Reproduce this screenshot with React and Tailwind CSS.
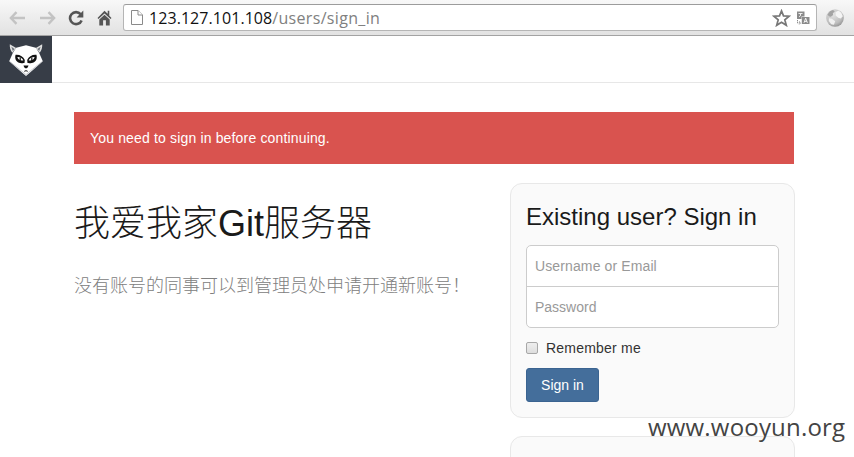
function BackIcon() {
  return (
    <svg className="w-[17px] h-[14px]" viewBox="0 0 17 14" fill="none" stroke="#c3c3c3" strokeWidth="2.4">
      <path d="M7.5 1.2 1.9 7l5.6 5.8M2.2 7H16" />
    </svg>
  );
}

function ForwardIcon() {
  return (
    <svg className="w-[17px] h-[14px]" viewBox="0 0 17 14" fill="none" stroke="#c3c3c3" strokeWidth="2.4">
      <path d="M9.5 1.2 15.1 7l-5.6 5.8M14.8 7H1" />
    </svg>
  );
}

function ReloadIcon() {
  return (
    <svg className="w-4 h-4" viewBox="0 0 16 16">
      <path d="M12.6 4.2A6 6 0 1 0 13.6 10.4" fill="none" stroke="#555" strokeWidth="2.6" />
      <path d="M15.3 0.6v6.9H8.6z" fill="#555" />
    </svg>
  );
}

function HomeIcon() {
  return (
    <svg className="w-[15px] h-4" viewBox="0 0 15 16" fill="#555">
      <path d="M7.5 .8.5 7.9l1 1.1 6-5.6 6 5.6 1-1.1-2.2-2.2V.8h-1.6v3z" />
      <path d="M7.5 4.8 2.3 9.6v5.9h3.8V10.2h2.8v5.3h3.8V9.6z" />
    </svg>
  );
}

function PageIcon() {
  return (
    <svg className="w-3 h-[15px]" viewBox="0 0 12 15" fill="#fff" stroke="#8a8a8a">
      <path d="M.5.5H7L11.5 5v9.5H.5z" />
      <path d="M7 .5V5h4.5" />
    </svg>
  );
}

function StarIcon() {
  return (
    <svg className="w-[19px] h-[18px]" viewBox="0 0 19 18" fill="#fff" stroke="#777" strokeWidth="1.7">
      <path d="M9.5 1.9 11.5 6.9 17.1 7.2 12.8 10.8 14.3 16.3 9.5 13.2 4.7 16.3 6.2 10.8 1.9 7.2 7.5 6.9z" />
    </svg>
  );
}

function TranslateIcon() {
  return (
    <svg className="w-[14px] h-[14px]" viewBox="0 0 14 14">
      <path d="M1 .5h7.5v5H5.5V8H1z" fill="#8b8b8b" />
      <path d="M2.5 2.5h4M4.5 2v2M3 5.8l2-1.6" stroke="#eee" fill="none" />
      <path d="M5.8 6h7.7v7H5.8z" fill="#8b8b8b" />
      <path d="m8 11.8 1.7-4.6 1.7 4.6M8.6 10.4h2.2" stroke="#fff" fill="none" strokeWidth=".9" />
      <path d="M1.5 9v3h3M3 10.5 4.7 12 3 13.6" stroke="#8b8b8b" fill="none" strokeDasharray="1.4 .7" />
    </svg>
  );
}

function GlobeIcon() {
  return (
    <svg className="w-[18px] h-[18px]" viewBox="0 0 18 18">
      <defs>
        <radialGradient id="globe" cx=".4" cy=".3" r=".75">
          <stop offset="0" stopColor="#e4e4e4" />
          <stop offset=".7" stopColor="#bdbdbd" />
          <stop offset="1" stopColor="#8f8f8f" />
        </radialGradient>
      </defs>
      <circle cx="9" cy="9" r="8.8" fill="url(#globe)" />
      <path d="M1.5 5.5 4 2.3 7 1l1.8 1.6-2 1.6.4 1.9-2.5 1.6-1.8-.5z" fill="#a3a3a3" />
      <path d="m9.5 3.2 3-1.6 2.8 2.2 1.5 3.5-2 2.3-2.6-.8-2.5-2.4z" fill="#f4f4f4" />
      <path d="m3 9.2 3 .6 3.2 2.4-1.3 3.6-2.6-.6L2.8 12z" fill="#f0f0f0" />
    </svg>
  );
}

function Logo() {
  return (
    <svg className="w-[36px] h-[34px]" viewBox="0 0 36 34">
      <path d="M1.8 1.2 8.2 5 4.3 9.8C2.3 7 1.6 4.2 1.8 1.2z" fill="#dedede" />
      <path d="M34.2 1.2 27.8 5l3.9 4.8c2-2.8 2.7-5.6 2.5-8.6z" fill="#dedede" />
      <path d="M3.4 3.8 6.6 6 4.8 8z M32.6 3.8 29.4 6l1.8 2z" fill="#6d727a" />
      <path d="M18 2.2 27.8 4.7 31.2 10 34.8 18.2 25.5 26.5 18 33 10.5 26.5 1.2 18.2 4.8 10 8.2 4.7z" fill="#fff" />
      <path d="m2.2 18.8 9 7.2L18 31.6l6.8-5.6 9-7.2" fill="none" stroke="#afb2b7" strokeWidth=".7" />
      <path d="M7.6 11.7c4.2-.4 7.6 1.7 9.2 5.3l-.3 3.1c-4 .5-8.4-.6-9.1-4.4-.3-1.6-.2-2.8.2-4z" fill="#111" />
      <path d="M28.4 11.7c-4.2-.4-7.6 1.7-9.2 5.3l.3 3.1c4 .5 8.4-.6 9.1-4.4.3-1.6.2-2.8-.2-4z" fill="#111" />
      <path d="M9.4 14.1c2.6-.1 4.5.8 6 3.1-2.9.7-5.3-.3-6-3.1zM26.6 14.1c-2.6-.1-4.5.8-6 3.1 2.9.7 5.3-.3 6-3.1z" fill="#fff" />
      <path d="M12.2 14.4v3M23.8 14.4v3" stroke="#111" strokeWidth="1.2" />
      <path d="M15.5 22.6h5l-.8 1.8L18 25.6l-1.7-1.2z" fill="#111" />
      <path d="m16.3 28.3 1.7-.6 1.7.6" fill="none" stroke="#111" />
    </svg>
  );
}

function BrowserBar() {
  return (
    <div className="flex h-9 items-center border-b border-[#a3a3a3] bg-linear-to-b from-[#f8f8f8] to-[#e2e2e2] pl-[9px] pr-[10px]">
      <div className="flex items-center">
        <BackIcon />
        <span className="ml-[13px]"><ForwardIcon /></span>
        <span className="ml-3"><ReloadIcon /></span>
        <span className="ml-[13px]"><HomeIcon /></span>
      </div>
      <div className="ml-[11px] flex h-[27px] w-[695px] items-center rounded-[3px] border border-[#b5b5b5] border-t-[#9c9c9c] bg-white pl-[7px] pr-[6px]">
        <PageIcon />
        <span className="ml-[6px] whitespace-nowrap pt-px font-['Open_Sans','Noto_Sans',sans-serif] text-base leading-6 tracking-[0.32px] text-[#808080]">
          <span className="tracking-[0.06px] text-[#111]">123.127.101.108</span>/users/sign_in
        </span>
        <span className="ml-auto"><StarIcon /></span>
        <span className="ml-[5px]"><TranslateIcon /></span>
      </div>
      <span className="ml-[9px]"><GlobeIcon /></span>
    </div>
  );
}

function SignInCard() {
  return (
    <section className="h-[235px] rounded-xl border border-[#e8e8e8] bg-[#fafafa] px-[15px] pt-[19px]">
      <h3 className="text-2xl leading-7 text-[#1a1a1a]">Existing user? Sign in</h3>
      <div className="mt-[14px] h-[83px] w-[253px] overflow-hidden rounded-[5px] border border-[#ccc] bg-white">
        <input className="block h-[41px] w-full border-b border-[#ccc] px-2 text-sm tracking-[0.12px] outline-none placeholder:text-[#999]" placeholder="Username or Email" />
        <input className="block h-10 w-full px-2 text-sm outline-none placeholder:text-[#999]" type="password" placeholder="Password" />
      </div>
      <label className="mt-[10px] flex h-5 items-center gap-2 text-sm tracking-[0.22px] text-[#333]">
        <input type="checkbox" className="h-3 w-3 appearance-none rounded-[2px] border border-[#a8a8a8] bg-linear-to-b from-[#eee] to-[#dedede]" />
        Remember me
      </label>
      <button className="mt-[10px] h-[34px] w-[73px] rounded-[3px] border border-[#3b6491] bg-[#446e9b] text-sm text-white">Sign in</button>
    </section>
  );
}

export default function App() {
  return (
    <div className="relative h-[457px] w-[854px] overflow-hidden bg-white font-['Liberation_Sans','Noto_Sans_CJK_SC',sans-serif]">
      <BrowserBar />
      <header className="h-[47px] border-b border-[#e7e7e7]">
        <div className="flex h-[47px] w-[52px] items-center justify-center bg-[#373d47]">
          <Logo />
        </div>
      </header>
      <main className="ml-[74px] mt-[29px] w-[721px]">
        <div className="flex h-[52px] w-[720px] items-center bg-[#d9534f] px-4 text-sm tracking-[0.16px] text-white">
          You need to sign in before continuing.
        </div>
        <div className="mt-[19px] flex justify-between">
          <div className="pt-[19px]">
            <h1 className="whitespace-nowrap text-4xl leading-[44px] font-light text-[#1a1a1a]">
              我爱我家Git服务器
            </h1>
            <p className="mt-[27px] whitespace-nowrap text-lg leading-[26px] font-light text-[#808080]">
              没有账号的同事可以到管理员处申请开通新账号！
            </p>
          </div>
          <div className="flex w-[285px] flex-col gap-[18px]">
            <SignInCard />
            <section className="h-[60px] rounded-xl border border-[#e8e8e8] bg-[#fafafa]" />
          </div>
        </div>
      </main>
      <div className="absolute left-[648px] top-[411px] whitespace-nowrap font-['Open_Sans','Noto_Sans',sans-serif] text-2xl leading-8 tracking-[0.19px] text-[#444]">
        www.wooyun.org
      </div>
    </div>
  );
}
